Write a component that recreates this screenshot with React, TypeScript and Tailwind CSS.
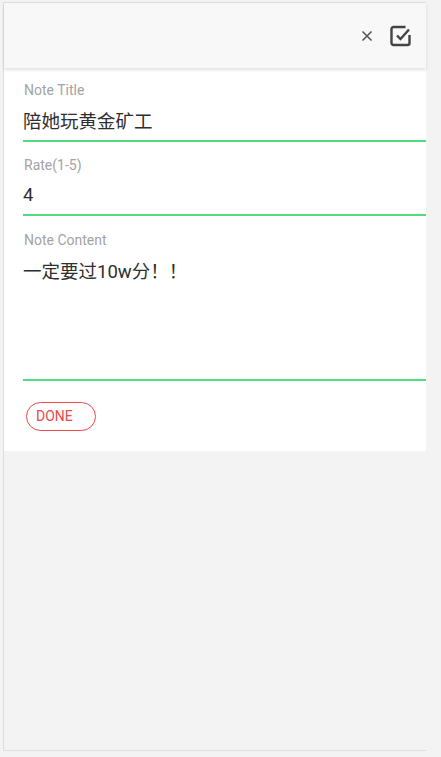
import React from "react";

const font = { fontFamily: "Roboto, 'Noto Sans CJK SC', sans-serif" };

type FieldProps = {
  label: string;
  value: string;
  gapTop: string;
  gapBottom: string;
  boxH?: string;
};

function Field({ label, value, gapTop, gapBottom, boxH }: FieldProps) {
  return (
    <div className="ml-[19px]">
      <div className="pl-[1px] text-[14px] leading-4 text-[#a3a3a3]">{label}</div>
      <div
        className={`text-[18.5px] leading-6 text-[#2e2e2e] ${gapTop} ${gapBottom} ${boxH ?? ""}`}
      >
        {value}
      </div>
      <div className="h-[2px] bg-[#52dc7e]" />
    </div>
  );
}

export default function App() {
  return (
    <div className="w-[441px] h-[757px] bg-[#f3f3f3] pt-[2px] pl-[3px]" style={font}>
      <div className="w-[423px] h-[749px] border-l border-t border-b border-[#dedede] bg-[#f3f3f3] flex flex-col">
        <header className="h-[65px] bg-[#f8f8f8] shadow-[0_2px_3px_rgba(0,0,0,0.12)] flex items-center justify-end pr-[13px] gap-[16px] relative z-10">
          <svg width="12" height="12" viewBox="0 0 12 12" className="mt-[1px]">
            <path d="M1.5 1.5L10.5 10.5M10.5 1.5L1.5 10.5" stroke="#555" strokeWidth="1.6" />
          </svg>
          <svg width="24" height="24" viewBox="0 0 24 24" fill="none">
            <path
              d="M20.5 11v8a2 2 0 0 1-2 2H4.5a2 2 0 0 1-2-2V5a2 2 0 0 1 2-2h12"
              stroke="#444"
              strokeWidth="2.4"
            />
            <path d="M8 11.5l3.5 3.5L20 5.5" stroke="#444" strokeWidth="2.4" />
          </svg>
        </header>
        <main className="bg-white pt-[14px] pb-[20px]">
          <Field label="Note Title" value="陪她玩黄金矿工" gapTop="mt-[12px]" gapBottom="mb-[6px]" />
          <div className="h-[15px]" />
          <Field label="Rate(1-5)" value="4" gapTop="mt-[10px]" gapBottom="mb-[7px]" />
          <div className="h-[16px]" />
          <Field
            label="Note Content"
            value="一定要过10w分！！"
            gapTop="mt-[12px]"
            gapBottom="mb-0"
            boxH="h-[119px]"
          />
          <div className="mt-[21px] ml-[22px]">
            <button className="w-[70px] h-[29px] rounded-full border-[1.5px] border-[#f0474a] text-[#f0474a] text-[14px] font-normal flex items-center pl-[9px]">
              DONE
            </button>
          </div>
        </main>
      </div>
    </div>
  );
}
